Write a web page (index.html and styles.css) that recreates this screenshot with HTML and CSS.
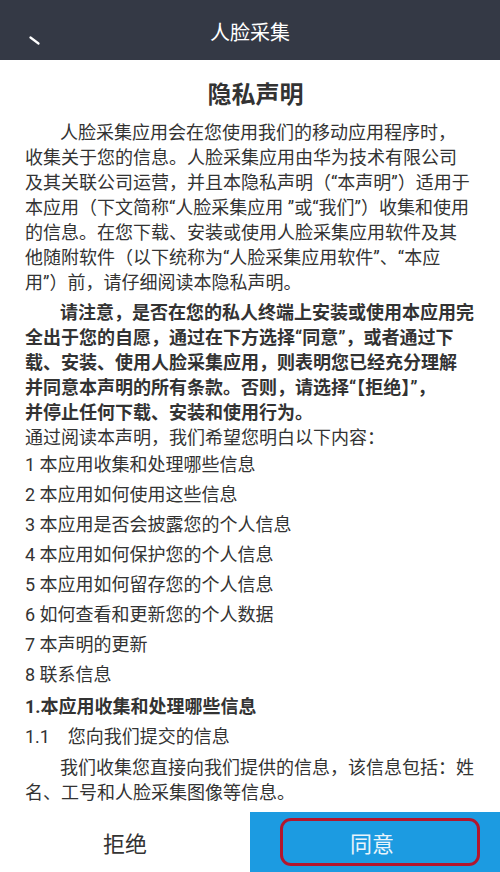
FILE: index.html
```html
<!DOCTYPE html>
<html lang="zh-CN">
<head>
<meta charset="utf-8">
<title>人脸采集</title>
<link rel="stylesheet" href="styles.css">
</head>
<body>
<div class="app">
  <header class="topbar">
    <span class="back" aria-label="返回">
      <svg width="12" height="10" viewBox="0 0 12 10"><path d="M1.5 1.5 L9.5 7.5" stroke="#ffffff" stroke-width="2.2" stroke-linecap="round" fill="none"/></svg>
    </span>
    <h1 class="topbar-title">人脸采集</h1>
  </header>
  <main class="content">
    <h2 class="doc-title">隐私声明</h2>
    <p class="para indent">人脸采集应用会在您使用我们的移动应用程序时，<br>收集关于您的信息。人脸采集应用由华为技术有限公司<br>及其关联公司运营，并且本隐私声明（“本声明”）适用于<br>本应用（下文简称“人脸采集应用 ”或“我们”）收集和使用<br>的信息。在您下载、安装或使用人脸采集应用软件及其<br>他随附软件（以下统称为“人脸采集应用软件”、“本应<br>用”）前，请仔细阅读本隐私声明。</p>
    <p class="para indent bold">请注意，是否在您的私人终端上安装或使用本应用完<br>全出于您的自愿，通过在下方选择“同意”，或者通过下<br>载、安装、使用人脸采集应用，则表明您已经充分理解<br>并同意本声明的所有条款。否则，请选择“【拒绝】”，<br>并停止任何下载、安装和使用行为。</p>
    <p class="para lead">通过阅读本声明，我们希望您明白以下内容：</p>
    <ul class="toc">
      <li>1 本应用收集和处理哪些信息</li>
      <li>2 本应用如何使用这些信息</li>
      <li>3 本应用是否会披露您的个人信息</li>
      <li>4 本应用如何保护您的个人信息</li>
      <li>5 本应用如何留存您的个人信息</li>
      <li>6 如何查看和更新您的个人数据</li>
      <li>7 本声明的更新</li>
      <li>8 联系信息</li>
    </ul>
    <h3 class="section">1.本应用收集和处理哪些信息</h3>
    <p class="sub">1.1&nbsp;&nbsp;&nbsp;&nbsp;您向我们提交的信息</p>
    <p class="para indent after-sub">我们收集您直接向我们提供的信息，该信息包括：姓<br>名、工号和人脸采集图像等信息。</p>
  </main>
  <footer class="actions">
    <button class="btn btn-reject" type="button">拒绝</button>
    <button class="btn btn-agree" type="button"><span class="agree-frame">同意</span></button>
  </footer>
</div>
</body>
</html>
```
FILE: styles.css
```css
* { box-sizing: border-box; }
html, body {
  margin: 0;
  padding: 0;
  background: #ffffff;
}
body {
  font-family: Roboto, "Noto Sans CJK SC", sans-serif;
  color: #333333;
}
.app {
  width: 500px;
  height: 872px;
  display: flex;
  flex-direction: column;
  overflow: hidden;
}
.topbar {
  height: 60px;
  flex: none;
  background: #343945;
  display: flex;
  align-items: center;
  justify-content: center;
  position: relative;
}
.back {
  position: absolute;
  left: 29px;
  top: 36px;
  line-height: 0;
}
.topbar-title {
  margin: 6px 0 0;
  font-size: 20px;
  font-weight: 400;
  color: #ffffff;
  line-height: 28px;
}
.content {
  flex: 1;
  overflow: hidden;
  padding: 19px 10px 0 25px;
}
.doc-title {
  margin: 0;
  text-align: center;
  font-size: 24px;
  font-weight: 700;
  line-height: 32px;
  color: #333333;
  padding-right: 4px;
}
.para {
  margin: 9px 0 0;
  font-size: 18px;
  line-height: 25px;
}
.para.indent { text-indent: 35px; }
.para.bold { font-weight: 700; margin-top: 5px; }
.para.lead { margin-top: 0; }
.toc {
  list-style: none;
  margin: 0;
  padding: 0;
}
.toc li {
  font-size: 18px;
  line-height: 30px;
}
.section {
  margin: 2px 0 0;
  font-size: 18px;
  font-weight: 700;
  line-height: 30px;
}
.sub {
  margin: 0;
  font-size: 18px;
  line-height: 30px;
}
.para.after-sub { margin-top: 3px; }
.actions {
  height: 60px;
  flex: none;
  display: flex;
}
.btn {
  flex: none;
  width: 50%;
  border: 0;
  margin: 0;
  padding: 0;
  font-family: Roboto, "Noto Sans CJK SC", sans-serif;
  font-size: 22px;
  cursor: pointer;
}
.btn-reject {
  background: #ffffff;
  color: #333333;
}
.btn-agree {
  background: #1c9be1;
  color: #e9f4fb;
  display: flex;
  align-items: center;
  justify-content: center;
  padding: 6px 20px 6px 30px;
}
.agree-frame {
  flex: 1;
  height: 48px;
  border: 3px solid #b3162d;
  border-radius: 11px;
  display: flex;
  align-items: center;
  justify-content: center;
  padding-right: 16px;
}
```
